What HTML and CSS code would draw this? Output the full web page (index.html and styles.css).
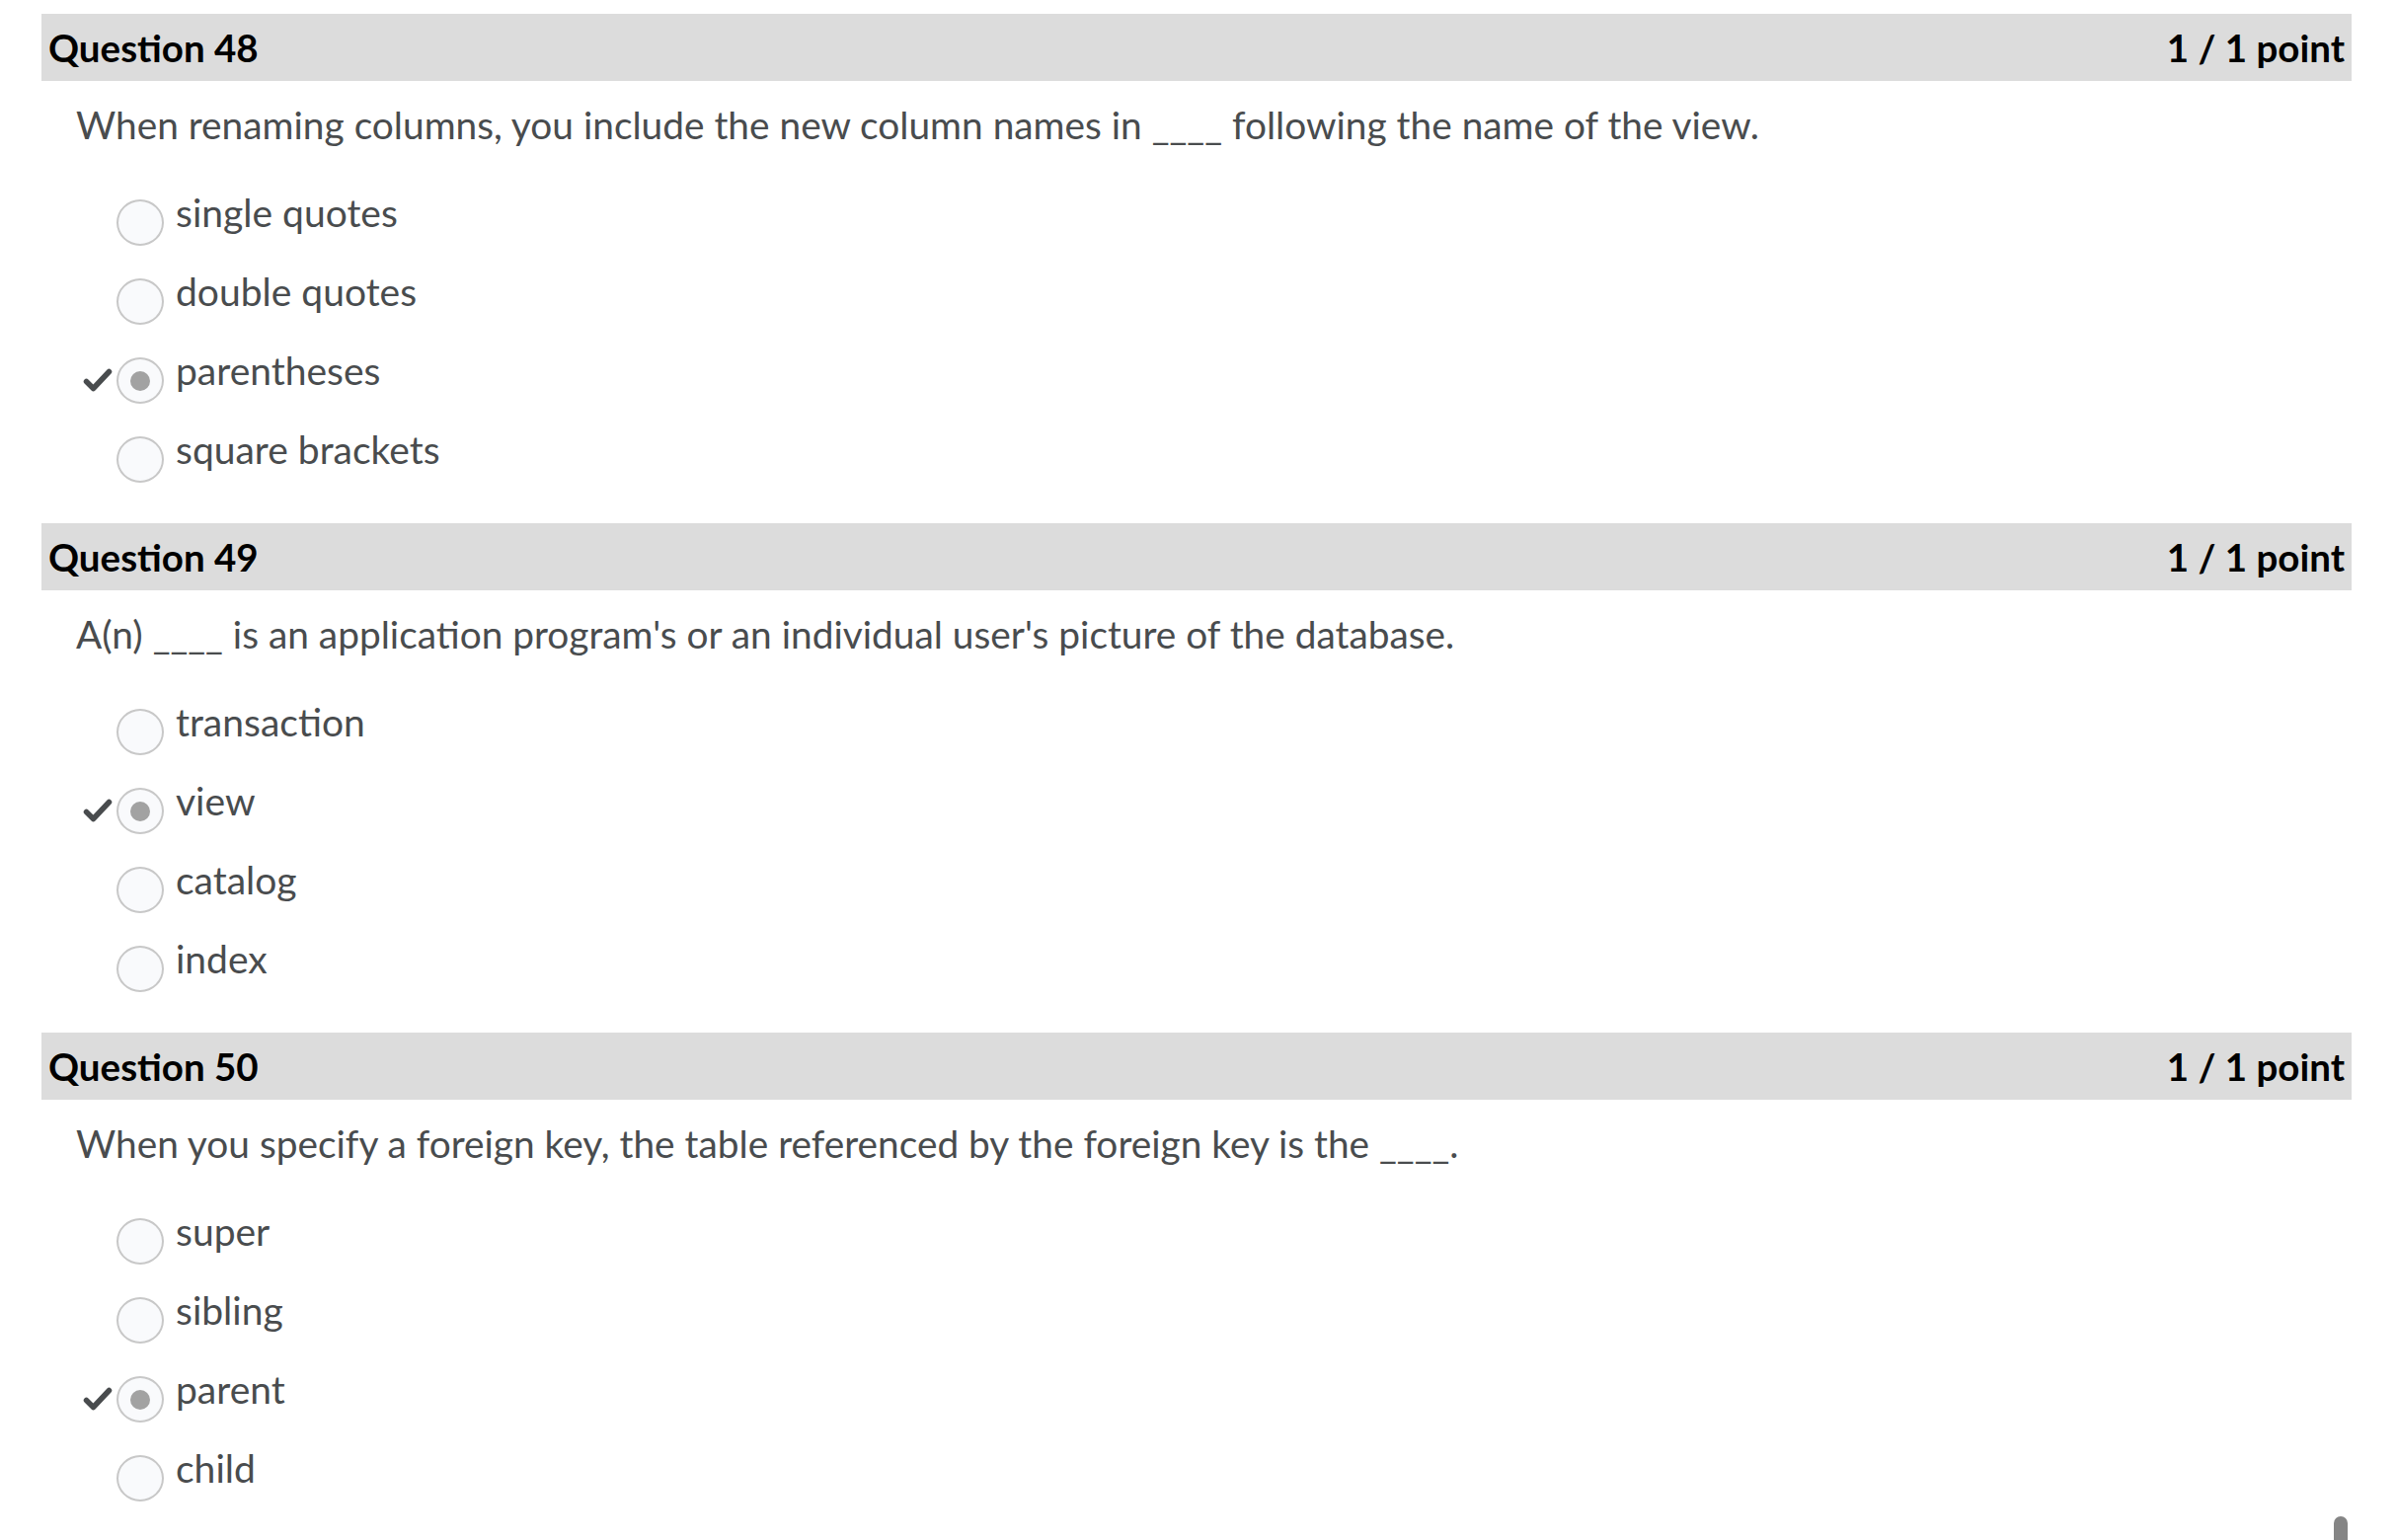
FILE: index.html
```html
<!DOCTYPE html>
<html lang="en">
<head>
<meta charset="utf-8">
<title>Quiz review</title>
<link rel="stylesheet" href="styles.css">
</head>
<body>
<main class="quiz">
  <section class="question">
    <header class="q-head"><span>Question 48</span><span>1 / 1 point</span></header>
    <p class="q-text">When renaming columns, you include the new column names in ____ following the name of the view.</p>
    <ul class="options">
      <li class="option"><span class="mark"></span><span class="radio"></span><span class="label">single quotes</span></li>
      <li class="option"><span class="mark"></span><span class="radio"></span><span class="label">double quotes</span></li>
      <li class="option"><span class="mark"><svg viewBox="0 0 30 26" width="30" height="26"><path d="M3.5 14.5 L10.5 21.5 L26.5 4.5" fill="none" stroke="#494c4e" stroke-width="5.5" stroke-linecap="round" stroke-linejoin="round"/></svg></span><span class="radio checked"></span><span class="label">parentheses</span></li>
      <li class="option"><span class="mark"></span><span class="radio"></span><span class="label">square brackets</span></li>
    </ul>
  </section>
  <section class="question">
    <header class="q-head"><span>Question 49</span><span>1 / 1 point</span></header>
    <p class="q-text">A(n) ____ is an application program's or an individual user's picture of the database.</p>
    <ul class="options">
      <li class="option"><span class="mark"></span><span class="radio"></span><span class="label">transaction</span></li>
      <li class="option"><span class="mark"><svg viewBox="0 0 30 26" width="30" height="26"><path d="M3.5 14.5 L10.5 21.5 L26.5 4.5" fill="none" stroke="#494c4e" stroke-width="5.5" stroke-linecap="round" stroke-linejoin="round"/></svg></span><span class="radio checked"></span><span class="label">view</span></li>
      <li class="option"><span class="mark"></span><span class="radio"></span><span class="label">catalog</span></li>
      <li class="option"><span class="mark"></span><span class="radio"></span><span class="label">index</span></li>
    </ul>
  </section>
  <section class="question">
    <header class="q-head"><span>Question 50</span><span>1 / 1 point</span></header>
    <p class="q-text">When you specify a foreign key, the table referenced by the foreign key is the ____.</p>
    <ul class="options">
      <li class="option"><span class="mark"></span><span class="radio"></span><span class="label">super</span></li>
      <li class="option"><span class="mark"></span><span class="radio"></span><span class="label">sibling</span></li>
      <li class="option"><span class="mark"><svg viewBox="0 0 30 26" width="30" height="26"><path d="M3.5 14.5 L10.5 21.5 L26.5 4.5" fill="none" stroke="#494c4e" stroke-width="5.5" stroke-linecap="round" stroke-linejoin="round"/></svg></span><span class="radio checked"></span><span class="label">parent</span></li>
      <li class="option"><span class="mark"></span><span class="radio"></span><span class="label">child</span></li>
    </ul>
  </section>
</main>
<div class="scroll-thumb"></div>
</body>
</html>
```
FILE: styles.css
```css
html, body {
  margin: 0;
  padding: 0;
  background: #ffffff;
  overflow: hidden;
  height: 1560px;
}
body {
  font-family: Lato, "Open Sans", sans-serif;
  color: #494c4e;
  position: relative;
}
.quiz {
  padding: 14px 46px 0 42px;
}
.question {
  height: 516px;
}
.q-head {
  height: 68px;
  background: #dcdcdc;
  display: flex;
  justify-content: space-between;
  align-items: center;
  padding: 0 7px;
  font-weight: 700;
  font-size: 38.5px;
  line-height: 68px;
  color: #000;
}
.q-text {
  margin: 22px 0 0 0;
  padding-left: 35px;
  font-size: 38.85px;
  line-height: 44px;
}
.options {
  list-style: none;
  margin: 45px 0 0 0;
  padding: 0 0 0 42px;
}
.option {
  display: flex;
  align-items: flex-start;
  height: 80px;
  font-size: 39px;
  line-height: 44px;
}
.mark {
  width: 34px;
  flex: none;
  padding-top: 19px;
  height: 26px;
}
.mark svg {
  display: block;
}
.radio {
  flex: none;
  box-sizing: border-box;
  width: 48px;
  height: 47px;
  margin-top: 9px;
  border: 2px solid #c8c8c8;
  border-radius: 50%;
  background: #f9fafc;
  display: flex;
  align-items: center;
  justify-content: center;
}
.radio.checked::after {
  content: "";
  width: 20px;
  height: 20px;
  border-radius: 50%;
  background: #a2a2a2;
}
.label {
  margin-left: 12px;
}
.scroll-thumb {
  position: absolute;
  left: 2364px;
  top: 1536px;
  width: 14px;
  height: 40px;
  border-radius: 7px;
  background: #858585;
}
```
